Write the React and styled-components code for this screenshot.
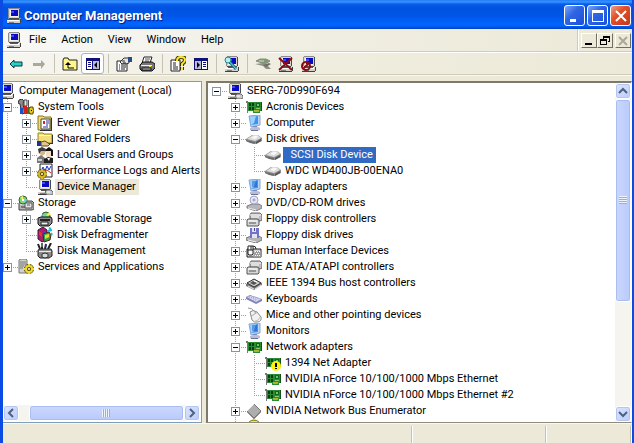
import { useState } from 'react';
import styled, { createGlobalStyle, css } from 'styled-components';

const COLORS = {
  face: '#ece9d8',
  text: '#000',
  shadow: '#aca899',
  select: '#316ac5',
};

/* ---------- icons, all drawn on a 16x16 grid ---------- */

const Crt = () => (
  <>
    <path d="M3 0h10l1 1v9l-1 1H3L2 10V1z" fill="#d8d5cc" />
    <path d="M3 0h10v1H3zM2 1h1v9H2z" fill="#8c8c8c" />
    <path d="M13 1h1v9h-1zM3 10h10v1H3z" fill="#4a4a4a" />
    <path d="M4 2h8v7H4z" fill="#f4f4f0" />
    <path d="M5 2h7v6H5z" fill="#0a0ac4" />
    <path d="M5 3h3v2H5z" fill="#3c50ee" />
    <path d="M1 12h12l2-2v4l-1 1H1z" fill="#d4d0c8" />
    <path d="M1 15h13v1H1zM14 11h1v4h-1z" fill="#404040" />
    <path d="M1 12h12v1H1z" fill="#fff" />
    <path d="M3 14h5v1H3z" fill="#808080" />
    <path d="M4 11h8v1H4z" fill="#555" />
  </>
);

const NetCard = () => (
  <>
    <path d="M0 2h2v12H1V4H0z" fill="#777" />
    <path d="M2 3h14v9h-2v2H7v-2H2z" fill="#2b8a34" />
    <path d="M3 4h2v3H3zM6 4h2v3H6zM3 8h2v3H3zM6 8h2v3H6z" fill="#0b3f13" />
    <path d="M10 4h4v4h-4z" fill="#14641f" />
    <path d="M11 5h2v2h-2z" fill="#6fc765" />
    <path d="M10 9h4v1h-4z" fill="#86cf6c" />
    <path d="M8 11h5v2H8z" fill="#a9b52c" />
    <path d="M15 3h1v9h-1z" fill="#115218" />
  </>
);

const BlueScreen = ({ stripes }) => (
  <>
    <path d="M3 1l11-1v10l-9 2z" fill="#b7d6f8" stroke="#8ba3cf" />
    <path d="M4 2l8-1v8l-7 1z" fill="#3f93ea" />
    <path d="M4 2l6-1-2 7-3 2z" fill="#9bd2ff" />
    {stripes && (
      <path d="M6 3h5M6 5h5M6 7h5" stroke="#1c5cc0" fill="none" />
    )}
    <path d="M7 11h4v2H7z" fill="#7c88b8" />
    <path d="M4 13l3-1h5l2 1v2l-3 1H6l-2-1z" fill="#b9bed6" />
    <path d="M5 15h7v1H5z" fill="#6a7196" />
  </>
);

const Disk = () => (
  <>
    <path d="M0 8l6-4h6l4 3v3l-6 3-5-1-5-2z" fill="#8e8e8e" />
    <path d="M1 8l6-4h5l3 3-6 3z" fill="#dcdcdc" />
    <path d="M5 7l3-2h3l1 1-3 2z" fill="#f8f8f8" />
    <path d="M0 9l9 2v2l-5-1-4-2z" fill="#6d6d6d" />
    <path d="M10 11l5-3v2l-5 3z" fill="#555" />
  </>
);

const Controller = () => (
  <>
    <path d="M5 2h9l2 2v5l-2 1H4V4z" fill="#bdbdbd" stroke="#666" />
    <path d="M4 4h11M5 6h8" stroke="#fff" />
    <path d="M2 8h9l2 1v5l-1 1H1V9z" fill="#d6d6d6" stroke="#555" />
    <path d="M2 10h9" stroke="#fff" />
    <path d="M3 12h7" stroke="#555" />
  </>
);

const Gear = ({ fill = '#f0dc2e' }) => (
  <>
    <circle cx="11" cy="10" r="3" fill="none" stroke="#4c4300" strokeWidth="4" />
    <circle cx="11" cy="10" r="3" fill="none" stroke={fill} strokeWidth="2" />
    <path
      d="M11 5v2M11 13v2M6 10h2M14 10h2M8 7l1 1M14 7l-1 1M8 13l1-1M14 13l-1-1"
      stroke={fill}
      strokeWidth="2"
    />
  </>
);

const Drive = () => (
  <>
    <path d="M1 8l2-2h11l2 2v6l-2 1H1z" fill="#b8b8b8" stroke="#444" />
    <path d="M2 9h12" stroke="#fff" />
    <path d="M3 12h8" stroke="#333" />
    <path d="M12 11h2v1h-2z" fill="#19c319" />
  </>
);

const Pane = ({ flip }) => (
  <g transform={flip ? 'translate(16 0) scale(-1 1)' : undefined}>
    <path d="M1 2h14v12H1z" fill="#10107a" />
    <path d="M2 5h5v8H2z" fill="#fff" />
    <path d="M8 5h6v8H8z" fill="#b9bcd8" />
    <path d="M3 6h3v1H3zM3 8h3v1H3zM3 10h3v1H3z" fill="#10107a" />
    <path d="M12 6v6L9 9z" fill="#000" />
  </g>
);

const DRAWINGS = {
  computer: <Crt />,
  device: (
    <>
      <Crt />
      <path d="M8 13l2-2h4l2 2v2l-2 1h-4z" fill="#c9c9c9" stroke="#666" />
      <path d="M10 13h3" stroke="#fff" />
    </>
  ),
  tools: (
    <>
      <path d="M1 1l3-1 2 2-1 3 2 9-3 1L2 5 0 4z" fill="#8a8a8a" stroke="#333" />
      <path d="M6 1h3v6H6z" fill="#e8e8e8" stroke="#444" />
      <path d="M6 7h3v8H6z" fill="#d3201a" />
      <path d="M10 1h1v7h-1z" fill="#555" />
      <path d="M9 8h3v7H9z" fill="#17893a" />
      <path d="M2 9h3v6H2z" fill="#1c50c8" />
      <path d="M12 8h3v2h1v3h-1v2h-3v-1h-1V9h1z" fill="#e5c92a" stroke="#5e4d00" />
      <path d="M13 11h1v1h-1z" fill="#000" />
    </>
  ),
  events: (
    <>
      <path d="M1 1h5l1 1h7v13H1z" fill="#f2dd72" stroke="#8a7416" />
      <path d="M4 4h9v10H4z" fill="#fff" stroke="#444" />
      <path d="M6 6h2v3H6z" fill="#d22" />
      <path d="M9 6h3M9 8h3M9 10h2M6 12h5" stroke="#2833a8" />
      <path d="M14 3h1v13H3v-1h11z" fill="#333" />
    </>
  ),
  shared: (
    <>
      <path d="M1 2h5l1 1h8v9H1z" fill="#f3df78" stroke="#9a8423" />
      <path d="M2 4h12v1H2z" fill="#fff8c4" />
      <path d="M15 4h1v9H5v-1h10z" fill="#333" />
      <path d="M0 10h4v5H0z" fill="#1434a4" />
      <path d="M4 11l4-1 3 2 2 1-2 2H4z" fill="#e6c48f" stroke="#5b441c" />
    </>
  ),
  users: (
    <>
      <path d="M2 3l3-2 3 2v4l-3 2-2-2z" fill="#d9b68a" />
      <path d="M1 2l4-2 4 2-1 2H4L2 7z" fill="#3b3b3b" />
      <path d="M0 11l4-3 4 3v5H0z" fill="#777" />
      <path d="M8 3l4-3 4 3v6h-2V5H9z" fill="#111" />
      <path d="M9 4h5v5l-2 2-3-2z" fill="#f4dcc4" />
      <path d="M7 12l4-2 5 1v5H7z" fill="#202020" />
      <path d="M10 11l2 3 1-3z" fill="#fff" />
      <path d="M1 12h4v2H1z" fill="#cfcfcf" />
    </>
  ),
  performance: (
    <>
      <path d="M3 1h12v13H3z" fill="#fff" stroke="#222" />
      <path d="M4 9l2-5 2 4 2-5 2 4 2-4" stroke="#1a35c4" fill="none" />
      <path d="M4 6l3 2 3-1 4 3" stroke="#d02020" fill="none" />
      <g transform="translate(-6 1)">
        <Gear fill="#d8b72a" />
      </g>
    </>
  ),
  storage: (
    <>
      <Drive />
      <circle cx="5" cy="5" r="4" fill="#7cdc6a" stroke="#3d5a3a" />
      <path d="M5 5l-3-3 3-1z" fill="#f7f26b" />
      <path d="M5 5l4-1-1 4z" fill="#6fd1ee" />
      <path d="M4 4h2v2H4z" fill="#fff" />
      <path d="M7 8h7v5H7z" fill="#e4e4e4" stroke="#555" />
      <path d="M9 10h3" stroke="#555" />
    </>
  ),
  removable: (
    <>
      <circle cx="9" cy="5" r="4" fill="#7ad86a" stroke="#335533" />
      <path d="M9 5l3-4 2 3z" fill="#f7ee60" />
      <path d="M9 5l-4-2 1 4z" fill="#74cdf0" />
      <path d="M1 7l3-1h10l1 2v4l-3 3H3l-2-2z" fill="#8f8f8f" stroke="#111" />
      <path d="M3 8h10v2H3z" fill="#222" />
      <path d="M4 11h7v3H4z" fill="#ededed" stroke="#222" />
    </>
  ),
  defrag: (
    <>
      <path d="M1 3l5-3 4 3v9l-5 3-4-3z" fill="#a81e6e" stroke="#47103a" />
      <path d="M2 4l3 2v4l-3-2z" fill="#e8352b" />
      <path d="M6 6l3-2v4l-3 2z" fill="#2b50dd" />
      <path d="M6 7l6-2 2 3-1 5-6 2z" fill="#28a745" stroke="#5c1d1d" />
      <path d="M8 8l4-1v3l-4 2z" fill="#f1d92e" />
      <path d="M12 1l2 1M11 4l4-1M14 6l1 2" stroke="#22b8d8" strokeWidth="2" />
    </>
  ),
  diskmgmt: (
    <>
      <path d="M1 1l2 5M5 0v6M9 1l-1 5M14 0l-3 6" stroke="#222" strokeWidth="2" />
      <path d="M5 0v4" stroke="#aaa" />
      <path d="M9 1v3" stroke="#2643c4" />
      <path d="M1 7l2-1h11l1 2v5l-3 2H3l-2-2z" fill="#8c8c8c" stroke="#222" />
      <path d="M2 8h12v1H2z" fill="#e8e8e8" />
      <path d="M5 11l3-1 3 1v3l-3 1-3-1z" fill="#dadada" stroke="#333" />
    </>
  ),
  services: (
    <>
      <path d="M1 1l2-1h5l1 1v13H1z" fill="#d0d0d0" stroke="#777" />
      <path d="M2 3h6M2 5h6M2 7h4M2 9h3" stroke="#777" />
      <Gear />
    </>
  ),
  netcard: <NetCard />,
  netcardWarn: (
    <>
      <NetCard />
      <circle cx="11" cy="11" r="5" fill="#ffee10" />
      <path d="M10 8h2v4h-2zM10 13h2v1h-2z" fill="#000" />
    </>
  ),
  screen: <BlueScreen />,
  display: <BlueScreen stripes />,
  disk: <Disk />,
  optical: (
    <>
      <path d="M1 11l5-2h7l3 2v2l-6 3-9-3z" fill="#b5b5bb" stroke="#7b7b84" />
      <path d="M2 13l8 2" stroke="#eee" />
      <circle cx="8" cy="5" r="4" fill="#e4e7f6" stroke="#a2a6c4" />
      <circle cx="8" cy="5" r="1" fill="#fff" stroke="#8c90b4" />
    </>
  ),
  controller: <Controller />,
  floppy: (
    <>
      <path d="M0 11l5-2h8l3 2v2l-6 3-10-3z" fill="#b5b5b5" stroke="#777" />
      <path d="M2 13l8 2" stroke="#eee" />
      <path d="M4 1h9v10H4z" fill="#7274c4" />
      <path d="M6 1h4v4H6zM6 7h5v4H6z" fill="#e2e4f6" />
      <path d="M8 1h1v3H8z" fill="#44468e" />
    </>
  ),
  hid: (
    <>
      <path d="M1 6h14v8H1z" fill="#d6d6d6" stroke="#222" />
      <path d="M9 8h6v6H7z" fill="#9c9c9c" />
      <path
        d="M9 8h1v1H9zM11 8h1v1h-1zM13 8h1v1h-1zM10 10h1v1h-1zM12 10h1v1h-1zM9 12h1v1H9zM11 12h1v1h-1zM13 12h1v1h-1z"
        fill="#fff"
      />
      <path d="M2 3h5v8l-1 1H3l-1-1z" fill="#fff" stroke="#222" />
      <path d="M2 7h5M5 3v4M7 3q3 0 3 3" stroke="#222" fill="none" />
    </>
  ),
  firewire: (
    <>
      <path d="M0 9l8-5 8 4v2l-8 5-8-4z" fill="#777" />
      <path d="M1 8l7-4 7 4-7 4z" fill="#ccc" stroke="#333" />
      <path d="M4 8l3-2 4 2-3 2z" fill="#555" />
      <path d="M2 11l6 3M9 14l6-4" stroke="#e9e9e9" />
      <path d="M8 6l3 1" stroke="#fff" />
    </>
  ),
  keyboard: (
    <>
      <path d="M0 6l4-2 12 4v2l-6 3-10-5z" fill="#8285b8" />
      <path d="M1 6l4-1 10 3-5 3z" fill="#dcdef4" />
      <path d="M3 6l8 3M5 6l8 2M7 9l3 1" stroke="#9a9cd0" strokeDasharray="1 1" />
    </>
  ),
  mouse: (
    <>
      <path d="M2 1q4 0 6 3" stroke="#999" fill="none" />
      <path d="M4 5q3-3 7 0l4 5q1 4-3 5-4 1-6-2z" fill="#f1f1f1" stroke="#8b8b8b" />
      <path d="M5 9q4-1 6-5M8 4l2 3" stroke="#aaa" fill="none" />
      <path d="M9 14q4 0 5-4" stroke="#c6c6c6" fill="none" />
    </>
  ),
  chip: (
    <>
      <path d="M8 2l7 7-7 7-7-7z" fill="#333" />
      <path d="M8 1l7 7-7 7-7-7z" fill="#aeaeae" stroke="#777" />
      <path d="M8 1L1 8" stroke="#eee" />
    </>
  ),
  unknown: (
    <>
      <circle cx="8" cy="8" r="7" fill="#f5e534" stroke="#7a7000" />
      <path d="M7 4h2v5H7zM7 11h2v2H7z" fill="#000" />
    </>
  ),
  back: (
    <path d="M2 8l4-4v2h8v4H6v2z" fill="#25d3c8" stroke="#0a3a3a" />
  ),
  forward: <path d="M14 8l-4-4v3H2v3h8v3z" fill="#aca899" />,
  up: (
    <>
      <path d="M1 4l1-2h4l1 2h8v10H1z" fill="#fff68a" stroke="#222" />
      <path d="M6 7v5h6" stroke="#000" fill="none" />
      <path d="M3 9l3-3 3 3z" fill="#000" />
    </>
  ),
  tree: <Pane />,
  pane: <Pane flip />,
  properties: (
    <>
      <path d="M1 5h10v10H1z" fill="#fff" stroke="#222" />
      <path d="M3 9h1M5 9h5M3 11h1M5 11h5M3 13h1M5 13h4" stroke="#222" />
      <path d="M4 6l4-4h5v5l-3 1-2-1-2 1z" fill="#e5e5e5" stroke="#333" />
      <path d="M12 1h4v5h-4z" fill="#274a8a" />
      <path d="M6 5h3M7 7h3" stroke="#333" />
    </>
  ),
  printer: (
    <>
      <path d="M5 1h8l-2 6H3z" fill="#fff" stroke="#222" />
      <path d="M6 3h5M6 5h4" stroke="#555" />
      <path d="M1 9l3-3h9l3 2v4l-3 3H3l-2-2z" fill="#777" stroke="#111" />
      <path d="M2 9h11v1H2z" fill="#eee" />
      <path d="M3 12h9v2H3z" fill="#ddd" stroke="#111" />
      <path d="M10 10h2v1h-2z" fill="#f4e52c" />
    </>
  ),
  help: (
    <>
      <path d="M1 4h9v11H1z" fill="#fff" stroke="#222" />
      <path d="M3 7h3M3 9h3M3 11h5M3 13h5" stroke="#222" />
      <path
        d="M7 5q0-4 4-4t4 3q0 2-3 4v2M12 11v3"
        stroke="#3a3500"
        strokeWidth="4"
        fill="none"
      />
      <path
        d="M7 5q0-4 4-4t4 3q0 2-3 4v2M12 11v3"
        stroke="#ffe92a"
        strokeWidth="2"
        fill="none"
      />
    </>
  ),
  scan: (
    <>
      <Crt />
      <path d="M5 5l7 8" stroke="#1b6f86" strokeWidth="3" />
      <path d="M5 5l7 8" stroke="#6fe4f4" />
      <circle cx="4" cy="4" r="3" fill="#aef2f4" stroke="#297d8c" />
    </>
  ),
  enable: (
    <>
      <path d="M1 5l4-2h6l4 2-5 3z" fill="#7d9a74" stroke="#8a8a80" />
      <path d="M0 8l8-1 4 2 4 4-5 0-3-3z" fill="#8f8f86" />
      <path d="M8 9l6-2 2 1-5 3z" fill="#707068" />
      <path d="M4 5h5" stroke="#cfe0c4" />
    </>
  ),
  uninstall: (
    <>
      <Crt />
      <path d="M1 2l13 12M14 2L1 14" stroke="#8c0d14" strokeWidth="2" />
    </>
  ),
  disable: (
    <>
      <Crt />
      <circle cx="5" cy="10" r="4" fill="none" stroke="#8c0d14" strokeWidth="2" />
      <path d="M2 13l6-6" stroke="#8c0d14" strokeWidth="2" />
    </>
  ),
};

const Svg = styled.svg`
  display: block;
  flex: none;
  width: 16px;
  height: 16px;
`;

const Icon = ({ name }) => (
  <Svg viewBox="0 0 16 16" aria-hidden="true">
    {DRAWINGS[name]}
  </Svg>
);

/* ---------- data ---------- */

const MENUS = ['File', 'Action', 'View', 'Window', 'Help'];

const TOOLS = [
  [
    { icon: 'back', label: 'Back' },
    { icon: 'forward', label: 'Forward', disabled: true },
  ],
  [
    { icon: 'up', label: 'Up one level' },
    { icon: 'tree', label: 'Show/Hide console tree', pressed: true },
  ],
  [
    { icon: 'properties', label: 'Properties' },
    { icon: 'printer', label: 'Print' },
  ],
  [
    { icon: 'help', label: 'Help' },
    { icon: 'pane', label: 'Show/Hide action pane' },
  ],
  [{ icon: 'scan', label: 'Scan for hardware changes' }],
  [
    { icon: 'enable', label: 'Update driver' },
    { icon: 'uninstall', label: 'Uninstall' },
    { icon: 'disable', label: 'Disable' },
  ],
];

const CONSOLE = {
  name: 'Computer Management (Local)',
  icon: 'computer',
  open: true,
  children: [
    {
      name: 'System Tools',
      icon: 'tools',
      open: true,
      children: [
        { name: 'Event Viewer', icon: 'events', children: [] },
        { name: 'Shared Folders', icon: 'shared', children: [] },
        { name: 'Local Users and Groups', icon: 'users', children: [] },
        { name: 'Performance Logs and Alerts', icon: 'performance', children: [] },
        { name: 'Device Manager', icon: 'device', highlight: 'inactive' },
      ],
    },
    {
      name: 'Storage',
      icon: 'storage',
      open: true,
      children: [
        { name: 'Removable Storage', icon: 'removable', children: [] },
        { name: 'Disk Defragmenter', icon: 'defrag' },
        { name: 'Disk Management', icon: 'diskmgmt' },
      ],
    },
    { name: 'Services and Applications', icon: 'services', children: [] },
  ],
};

const DEVICES = {
  name: 'SERG-70D990F694',
  icon: 'device',
  open: true,
  children: [
    { name: 'Acronis Devices', icon: 'netcard', children: [] },
    { name: 'Computer', icon: 'screen', children: [] },
    {
      name: 'Disk drives',
      icon: 'disk',
      open: true,
      children: [
        { name: '  SCSI Disk Device', icon: 'disk', highlight: 'active' },
        { name: 'WDC WD400JB-00ENA0', icon: 'disk' },
      ],
    },
    { name: 'Display adapters', icon: 'display', children: [] },
    { name: 'DVD/CD-ROM drives', icon: 'optical', children: [] },
    { name: 'Floppy disk controllers', icon: 'controller', children: [] },
    { name: 'Floppy disk drives', icon: 'floppy', children: [] },
    { name: 'Human Interface Devices', icon: 'hid', children: [] },
    { name: 'IDE ATA/ATAPI controllers', icon: 'controller', children: [] },
    { name: 'IEEE 1394 Bus host controllers', icon: 'firewire', children: [] },
    { name: 'Keyboards', icon: 'keyboard', children: [] },
    { name: 'Mice and other pointing devices', icon: 'mouse', children: [] },
    { name: 'Monitors', icon: 'display', children: [] },
    {
      name: 'Network adapters',
      icon: 'netcard',
      open: true,
      children: [
        { name: '1394 Net Adapter', icon: 'netcardWarn' },
        { name: 'NVIDIA nForce 10/100/1000 Mbps Ethernet', icon: 'netcard' },
        { name: 'NVIDIA nForce 10/100/1000 Mbps Ethernet #2', icon: 'netcard' },
      ],
    },
    { name: 'NVIDIA Network Bus Enumerator', icon: 'chip', children: [] },
    { name: '', icon: 'unknown' },
  ],
};

/* ---------- tree ---------- */

const Branch = ({ node, guides = [], last = true, root, hideRootGuide }) => {
  const [open, setOpen] = useState(Boolean(node.open));
  const showCell = !(root && hideRootGuide);
  const childGuides = showCell ? [...guides, !last] : guides;

  return (
    <li role="treeitem" aria-expanded={node.children ? open : undefined}>
      <TreeRow>
        {guides.map((line, index) => (
          <Guide key={index} $shape={line ? 'line' : 'none'} />
        ))}
        {showCell && (
          <Guide $shape={root ? 'root' : last ? 'elbow' : 'tee'}>
            {node.children && (
              <Expander
                type="button"
                $open={open}
                aria-label={`Toggle ${node.name.trim()}`}
                onClick={() => setOpen(!open)}
              />
            )}
          </Guide>
        )}
        <Icon name={node.icon} />
        {node.name && (
          <NodeLabel $highlight={node.highlight}>{node.name}</NodeLabel>
        )}
      </TreeRow>
      {open && node.children?.length > 0 && (
        <TreeList role="group">
          {node.children.map((child, index) => (
            <Branch
              key={child.name}
              node={child}
              guides={childGuides}
              last={index === node.children.length - 1}
            />
          ))}
        </TreeList>
      )}
    </li>
  );
};

const Chevron = ({ d }) => (
  <Svg viewBox="0 0 16 16" aria-hidden="true">
    <path d={d} fill="none" stroke="#4d6185" strokeWidth="2" />
  </Svg>
);

const Scrollbar = ({ horizontal }) => (
  <Bar $horizontal={horizontal}>
    <ScrollButton type="button" aria-label={horizontal ? 'Scroll left' : 'Scroll up'}>
      <Chevron d={horizontal ? 'M10 4L6 8l4 4' : 'M4 10l4-4 4 4'} />
    </ScrollButton>
    <Track $horizontal={horizontal}>
      <Thumb $horizontal={horizontal}>
        <Grip $horizontal={horizontal} />
      </Thumb>
    </Track>
    <ScrollButton type="button" aria-label={horizontal ? 'Scroll right' : 'Scroll down'}>
      <Chevron d={horizontal ? 'M6 4l4 4-4 4' : 'M4 6l4 4 4-4'} />
    </ScrollButton>
  </Bar>
);

export default function App() {
  return (
    <>
      <GlobalStyle />
      <Window>
        <TitleBar>
          <Icon name="computer" />
          <Title>Computer Management</Title>
          <CaptionButton type="button" aria-label="Minimize">
            <Svg viewBox="0 0 16 16">
              <path d="M3 11h6v3H3z" fill="#fff" />
            </Svg>
          </CaptionButton>
          <CaptionButton type="button" aria-label="Maximize">
            <Svg viewBox="0 0 16 16">
              <path d="M2 2h12v12H2zM3 5v8h10V5z" fill="#fff" fillRule="evenodd" />
            </Svg>
          </CaptionButton>
          <CaptionButton type="button" aria-label="Close" $close>
            <Svg viewBox="0 0 16 16">
              <path d="M3 3l10 10M13 3L3 13" stroke="#fff" strokeWidth="2" />
            </Svg>
          </CaptionButton>
        </TitleBar>

        <MenuBar>
          <Icon name="computer" />
          <MenuItems>
            {MENUS.map((menu) => (
              <MenuItem type="button" key={menu}>
                {menu}
              </MenuItem>
            ))}
          </MenuItems>
          <ChildControls>
            <ChildButton type="button" aria-label="Minimize child window">
              <Svg viewBox="0 0 16 16">
                <path d="M3 9h7v2H3z" fill="#000" />
              </Svg>
            </ChildButton>
            <ChildButton type="button" aria-label="Restore child window">
              <Svg viewBox="0 0 16 16">
                <path d="M5 2h7v2H5zM11 4h1v4h-2V7h1zM5 4h1v1H5z" fill="#000" />
                <path d="M2 5h7v6H2zM3 7v3h5V7z" fill="#000" fillRule="evenodd" />
              </Svg>
            </ChildButton>
            <ChildButton type="button" aria-label="Close child window" disabled $apart>
              <Svg viewBox="0 0 16 16">
                <path d="M3 3l8 8M11 3l-8 8" stroke="#aca899" strokeWidth="2" />
              </Svg>
            </ChildButton>
          </ChildControls>
        </MenuBar>

        <ToolBar>
          {TOOLS.map((group, index) => (
            <ToolGroup key={index}>
              {group.map((tool) => (
                <ToolButton
                  type="button"
                  key={tool.icon}
                  aria-label={tool.label}
                  disabled={tool.disabled}
                  $pressed={tool.pressed}
                >
                  <Icon name={tool.icon} />
                </ToolButton>
              ))}
            </ToolGroup>
          ))}
        </ToolBar>

        <Panels>
          <ConsolePanel>
            <TreeArea $scrolled>
              <TreeList role="tree" aria-label="Console tree">
                <Branch node={CONSOLE} root hideRootGuide />
              </TreeList>
            </TreeArea>
            <Scrollbar horizontal />
          </ConsolePanel>
          <DevicePanel>
            <TreeArea>
              <TreeList role="tree" aria-label="Devices">
                <Branch node={DEVICES} root />
              </TreeList>
            </TreeArea>
            <Scrollbar />
          </DevicePanel>
        </Panels>

        <StatusBar>
          <StatusCell />
          <StatusCell />
          <StatusCell />
        </StatusBar>
      </Window>
    </>
  );
}

/* ---------- styles ---------- */

const GlobalStyle = createGlobalStyle`
  * {
    box-sizing: border-box;
  }
  body {
    margin: 0;
    color: ${COLORS.text};
    font-family: Roboto, "Liberation Sans", sans-serif;
    font-size: 11px;
    line-height: 16px;
  }
  button {
    padding: 0;
    border: 0;
    color: inherit;
    background: none;
    font: inherit;
  }
`;

const Window = styled.div`
  display: flex;
  flex-direction: column;
  height: 100vh;
  overflow: hidden;
  background: ${COLORS.face};
  border: solid #0a4be4;
  border-width: 0 2px 0 3px;
`;

const TitleBar = styled.header`
  display: flex;
  flex: none;
  align-items: center;
  gap: 2px;
  height: 29px;
  margin: 0 -2px 0 -3px;
  padding: 2px 3px 0 6px;
  background: linear-gradient(
    #1f7cf5 0,
    #3a95ff 2px,
    #0a5ceb 4px,
    #0053e1 8px,
    #0055e8 16px,
    #0066ff 24px,
    #0062f6 26px,
    #003fc4 29px
  );
`;

const Title = styled.h1`
  flex: 1;
  margin: 0;
  color: #fff;
  font-size: 13px;
  font-weight: 700;
  line-height: 16px;
  text-shadow: 1px 1px 1px #0a1883;
`;

const CaptionButton = styled.button`
  display: flex;
  align-items: center;
  justify-content: center;
  width: 21px;
  height: 21px;
  border: 1px solid #fff;
  border-radius: 3px;
  background: ${({ $close }) =>
    $close
      ? 'linear-gradient(135deg, #f0a08a, #e0512b 40%, #c4381a)'
      : 'linear-gradient(135deg, #7ea6f8, #2f66e4 40%, #1c50d8)'};
`;

const MenuBar = styled.nav`
  display: flex;
  flex: none;
  align-items: center;
  height: 23px;
  padding-left: 3px;
  border-bottom: 1px solid #d0ccbb;
  background: linear-gradient(90deg, #f8f8f6, #f0eee2 50%, ${COLORS.face});
`;

const MenuItems = styled.div`
  display: flex;
  flex: 1;
`;

const MenuItem = styled.button`
  padding: 0 8px 0 7px;
`;

const ChildControls = styled.div`
  display: flex;
  align-items: center;
  align-self: stretch;
  padding: 0 1px 0 2px;
  border-left: 1px solid #fff;
  box-shadow: -1px 0 #d0ccbb;
`;

const ChildButton = styled.button`
  display: flex;
  width: 16px;
  height: 15px;
  margin-left: ${({ $apart }) => ($apart ? '2px' : '0')};
  border: 1px solid;
  border-color: #fff #716f64 #716f64 #fff;
  background: ${COLORS.face};
  overflow: hidden;
`;

const ToolBar = styled.div`
  display: flex;
  flex: none;
  height: 23px;
  padding-left: 1px;
  border-top: 1px solid #fff;
  border-bottom: 1px solid #d0ccbb;
  background: linear-gradient(90deg, #f6f5f0, #efedde 50%, ${COLORS.face});
`;

const ToolGroup = styled.div`
  display: flex;
  & + & {
    padding-left: 8px;
    background: linear-gradient(#c5c2b2, #c5c2b2) 4px 1px / 1px 19px no-repeat;
  }
`;

const ToolButton = styled.button`
  display: flex;
  align-items: center;
  justify-content: center;
  width: 23px;
  height: 21px;
  ${({ $pressed }) =>
    $pressed &&
    css`
      border: 1px solid #a3b3d0;
      border-radius: 3px;
      background: #fff;
    `}
`;

const Panels = styled.main`
  display: grid;
  flex: 1;
  grid-template-columns: 199px minmax(0, 1fr);
  gap: 4px;
  min-height: 0;
  padding-top: 5px;
  border-top: 1px solid #f8f7f0;
`;

const ConsolePanel = styled.section`
  display: flex;
  flex-direction: column;
  min-width: 0;
  min-height: 0;
  padding: 1px 1px 1px 0;
  border: 1px solid #7f9db9;
  border-width: 1px 1px 1px 0;
  background: #fff;
`;

const DevicePanel = styled.section`
  display: flex;
  min-width: 0;
  min-height: 0;
  border: solid;
  border-width: 2px 1px 1px 2px;
  border-color: #7d7a6c #fff #8f8c7d #7d7a6c;
  background: #fff;
`;

const TreeArea = styled.div`
  flex: 1;
  min-width: 0;
  min-height: 0;
  overflow: hidden;
  ${({ $scrolled }) =>
    $scrolled &&
    css`
      ul[role='tree'] {
        margin-left: -4px;
      }
    `}
`;

const TreeList = styled.ul`
  margin: 0;
  padding: 0;
  list-style: none;
`;

const TreeRow = styled.div`
  display: flex;
  height: 16px;
`;

const dotsDown = 'repeating-linear-gradient(#a0a0a0 0 1px, transparent 1px 2px)';
const dotsAcross =
  'repeating-linear-gradient(90deg, #a0a0a0 0 1px, transparent 1px 2px)';

const GUIDES = {
  none: 'none',
  root: `${dotsAcross} 8px 8px / 11px 1px no-repeat`,
  line: `${dotsDown} 8px 0 / 1px 16px no-repeat`,
  tee: `${dotsDown} 8px 0 / 1px 16px no-repeat, ${dotsAcross} 8px 8px / 11px 1px no-repeat`,
  elbow: `${dotsDown} 8px 0 / 1px 8px no-repeat, ${dotsAcross} 8px 8px / 11px 1px no-repeat`,
};

const Guide = styled.span`
  display: flex;
  flex: none;
  align-items: center;
  width: 19px;
  padding: 1px 0 0 4px;
  background: ${({ $shape }) => GUIDES[$shape]};
`;

const mark = 'linear-gradient(#000, #000)';

const Expander = styled.button`
  width: 9px;
  height: 9px;
  border: 1px solid #8a93a0;
  background: ${({ $open }) => ($open ? '' : `${mark} 3px 1px / 1px 5px no-repeat,`)}
    ${mark} 1px 3px / 5px 1px no-repeat, #fff;
`;

const NodeLabel = styled.span`
  margin-left: 2px;
  padding: 0 3px 0 2px;
  white-space: pre;
  ${({ $highlight }) =>
    $highlight === 'active' &&
    css`
      color: #fff;
      background: ${COLORS.select};
    `}
  ${({ $highlight }) =>
    $highlight === 'inactive' &&
    css`
      background: ${COLORS.face};
    `}
`;

const Bar = styled.div`
  display: flex;
  flex: none;
  flex-direction: ${({ $horizontal }) => ($horizontal ? 'row' : 'column')};
  ${({ $horizontal }) => ($horizontal ? 'height: 16px' : 'width: 16px')};
  background: #f5f4ef;
`;

const ScrollButton = styled.button`
  display: flex;
  flex: none;
  align-items: center;
  justify-content: center;
  width: 16px;
  height: 16px;
  border: 1px solid #fff;
  border-radius: 3px;
  background: linear-gradient(135deg, #dbe5ff, #bccdfa);
  box-shadow: inset 0 0 0 1px #b4c6f0;
  overflow: hidden;
`;

const Track = styled.div`
  display: flex;
  flex: 1;
  flex-direction: ${({ $horizontal }) => ($horizontal ? 'row' : 'column')};
  min-width: 0;
  min-height: 0;
  ${({ $horizontal }) => $horizontal && 'justify-content: flex-end'};
`;

const Thumb = styled.div`
  display: flex;
  align-items: center;
  justify-content: center;
  border: 1px solid #fff;
  border-radius: 3px;
  background: linear-gradient(
    ${({ $horizontal }) => ($horizontal ? '180deg' : '90deg')},
    #cbd8fe,
    #b9cafb
  );
  box-shadow: inset 0 0 0 1px #a9bdf0;
  ${({ $horizontal }) => ($horizontal ? 'width: 94%' : 'height: 66%')};
`;

const Grip = styled.span`
  width: 8px;
  height: 8px;
  background: repeating-linear-gradient(
    ${({ $horizontal }) => ($horizontal ? '90deg' : '180deg')},
    #eef4fe 0 1px,
    #8cb0f8 1px 2px
  );
`;

const StatusBar = styled.footer`
  display: grid;
  flex: none;
  grid-template-columns: minmax(0, 1fr) 134px 85px;
  height: 20px;
  padding-top: 2px;
  border-top: 1px solid #f8f7f0;
`;

const StatusCell = styled.div`
  border-right: 1px solid #fff;
  box-shadow: inset -1px 0 #c5c2b2;
`;
